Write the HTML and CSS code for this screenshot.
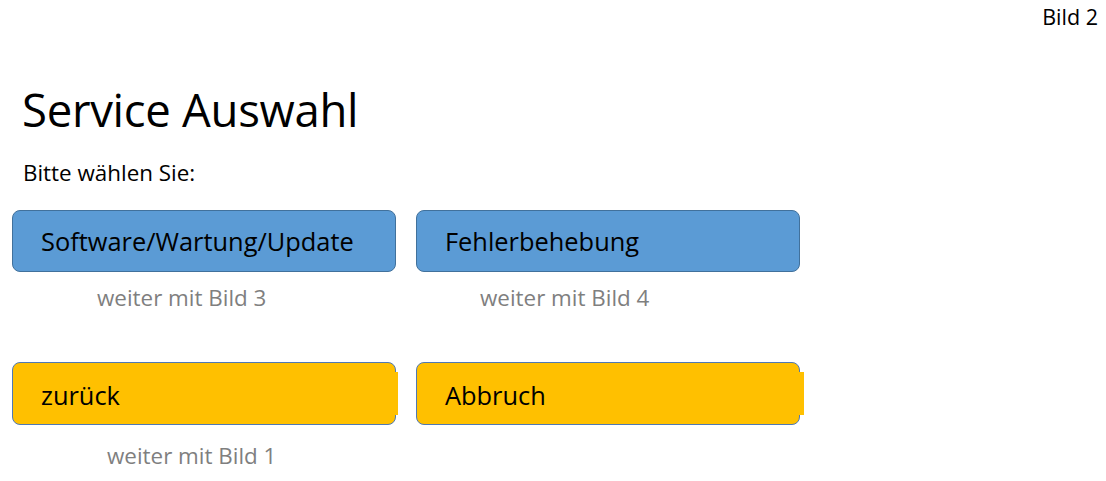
FILE: index.html
```html
<!DOCTYPE html>
<html lang="de">
<head>
<meta charset="utf-8">
<title>Service Auswahl</title>
<link rel="stylesheet" href="styles.css">
</head>
<body>
<div class="page">
  <div class="pagenum">Bild 2</div>
  <h1 class="title">Service Auswahl</h1>
  <p class="prompt">Bitte wählen Sie:</p>
  <div class="grid">
    <div class="cell">
      <div class="btn btn-blue">Software/Wartung/Update</div>
      <div class="note note-1">weiter mit Bild 3</div>
    </div>
    <div class="cell">
      <div class="btn btn-blue">Fehlerbehebung</div>
      <div class="note note-2">weiter mit Bild 4</div>
    </div>
    <div class="cell">
      <div class="btn btn-yellow">zurück</div>
      <div class="note note-3">weiter mit Bild 1</div>
    </div>
    <div class="cell">
      <div class="btn btn-yellow btn-wide">Abbruch</div>
    </div>
  </div>
</div>
</body>
</html>
```
FILE: styles.css
```css
html, body {
  margin: 0;
  padding: 0;
  background: #ffffff;
}
body {
  font-family: "Open Sans", "Noto Sans", sans-serif;
  color: #000;
}
.page {
  width: 1106px;
  height: 481px;
  overflow: hidden;
  box-sizing: border-box;
  padding: 0 0 0 12px;
  display: flex;
  flex-direction: column;
}
.pagenum {
  align-self: flex-end;
  font-size: 21.5px;
  line-height: 26px;
  margin: 4px 8px 0 0;
}
.title {
  font-weight: 400;
  font-size: 45.5px;
  line-height: 52px;
  margin: 53px 0 0 10px;
  letter-spacing: -0.3px;
}
.prompt {
  font-size: 22.4px;
  line-height: 28px;
  margin: 24px 0 0 11px;
}
.grid {
  display: grid;
  grid-template-columns: 384px 384px;
  grid-template-rows: 152px auto;
  column-gap: 20px;
  margin-top: 23px;
}
.btn {
  position: relative;
  box-sizing: border-box;
  width: 384px;
  height: 62px;
  border-radius: 8px;
  border: 1px solid #41719c;
  font-size: 25.4px;
  display: flex;
  align-items: center;
  padding-left: 28px;
}
.btn-blue {
  background: #5b9bd5;
}
.btn-yellow {
  background: #ffc000;
  height: 63px;
  border-color: #4f79b4;
  padding-top: 3px;
}
.btn-yellow::after {
  content: "";
  position: absolute;
  right: -3px;
  top: 9px;
  bottom: 9px;
  width: 4px;
  background: #ffc000;
}
.btn-wide::after {
  right: -5px;
  width: 6px;
}
.note {
  color: #7f7f7f;
  font-size: 22.4px;
  line-height: 28px;
  margin-top: 12px;
}
.note-1 { padding-left: 85px; }
.note-2 { padding-left: 64px; }
.note-3 { padding-left: 95px; margin-top: 17px; }
```
